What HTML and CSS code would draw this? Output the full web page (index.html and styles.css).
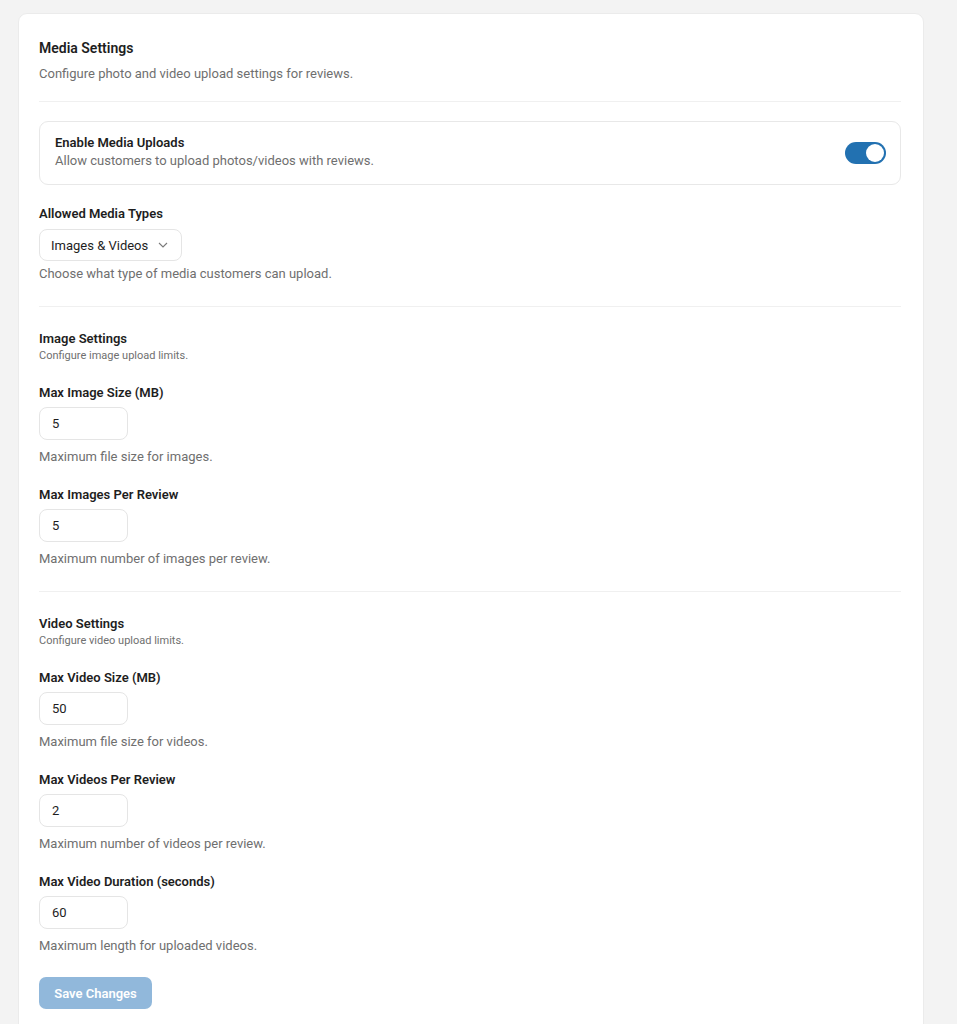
FILE: index.html
```html
<!DOCTYPE html>
<html lang="en">
<head>
<meta charset="utf-8">
<title>Media Settings</title>
<link rel="stylesheet" href="styles.css">
</head>
<body>
<div class="card">
  <header class="head">
    <h2 class="title">Media Settings</h2>
    <p class="desc">Configure photo and video upload settings for reviews.</p>
  </header>
  <hr class="divider first">
  <div class="toggle-box">
    <div class="toggle-text">
      <div class="toggle-title">Enable Media Uploads</div>
      <div class="desc">Allow customers to upload photos/videos with reviews.</div>
    </div>
    <span class="switch"><span class="knob"></span></span>
  </div>

  <div class="field top">
    <div class="label">Allowed Media Types</div>
    <div class="select">Images &amp; Videos
      <svg class="chev" width="10" height="6" viewBox="0 0 10 6"><path d="M1 1l4 4 4-4" fill="none" stroke="#7a7a7a" stroke-width="1.1"/></svg>
    </div>
    <p class="help">Choose what type of media customers can upload.</p>
  </div>

  <hr class="divider">

  <section class="group">
    <div class="group-title">Image Settings</div>
    <div class="group-sub">Configure image upload limits.</div>
    <div class="field">
      <div class="label">Max Image Size (MB)</div>
      <div class="input">5</div>
      <p class="help">Maximum file size for images.</p>
    </div>
    <div class="field">
      <div class="label">Max Images Per Review</div>
      <div class="input">5</div>
      <p class="help">Maximum number of images per review.</p>
    </div>
  </section>

  <hr class="divider">

  <section class="group">
    <div class="group-title">Video Settings</div>
    <div class="group-sub">Configure video upload limits.</div>
    <div class="field">
      <div class="label">Max Video Size (MB)</div>
      <div class="input">50</div>
      <p class="help">Maximum file size for videos.</p>
    </div>
    <div class="field">
      <div class="label">Max Videos Per Review</div>
      <div class="input">2</div>
      <p class="help">Maximum number of videos per review.</p>
    </div>
    <div class="field">
      <div class="label">Max Video Duration (seconds)</div>
      <div class="input">60</div>
      <p class="help">Maximum length for uploaded videos.</p>
    </div>
  </section>

  <button class="save" type="button">Save Changes</button>
</div>
</body>
</html>
```

FILE: styles.css
```css
* { box-sizing: border-box; }
html, body { margin: 0; padding: 0; }
body {
  background: #f3f3f3;
  font-family: Roboto, "Liberation Sans", Arial, sans-serif;
  color: #1e1e1e;
  padding: 13px 33px 0 18px;
}
.card {
  width: 906px;
  background: #fff;
  border: 1px solid #ebebeb;
  border-radius: 9px;
  padding: 24px 22px 40px 20px;
}
.title {
  margin: 0;
  font-size: 14px;
  line-height: 20px;
  font-weight: 600;
  color: #1e1e1e;
}
.desc {
  margin: 0;
  font-size: 13px;
  line-height: 18px;
  color: #6f6f6f;
}
.head .desc { margin-top: 7px; }
.divider {
  border: 0;
  height: 1px;
  background: #f0f0f0;
  margin: 23px 0;
}
.divider.first { margin: 18px 0 19px; }
.toggle-box {
  display: flex;
  align-items: center;
  justify-content: space-between;
  border: 1px solid #e8e8e8;
  border-radius: 9px;
  padding: 12px 14px 14px 15px;
}
.toggle-title {
  font-size: 13px;
  line-height: 18px;
  font-weight: 600;
}
.switch {
  position: relative;
  width: 41px;
  height: 22px;
  border-radius: 11px;
  background: #2271b1;
  display: inline-block;
  margin-top: 2px;
}
.knob {
  position: absolute;
  right: 2px;
  top: 2px;
  width: 18px;
  height: 18px;
  border-radius: 50%;
  background: #fff;
}
.field { margin-top: 21px; }
.field.top { margin-top: 20px; }
.field + .field { margin-top: 20px; }
.label {
  font-size: 13px;
  line-height: 18px;
  font-weight: 600;
}
.select {
  margin-top: 6px;
  width: 143px;
  height: 32px;
  border: 1px solid #e5e5e5;
  border-radius: 8px;
  display: flex;
  align-items: center;
  padding-left: 11px;
  font-size: 13px;
  color: #1e1e1e;
}
.chev { margin-left: 10px; }
.input {
  margin-top: 5px;
  width: 89px;
  height: 33px;
  border: 1px solid #e5e5e5;
  border-radius: 8px;
  display: flex;
  align-items: center;
  padding-left: 12px;
  font-size: 13px;
}
.help {
  margin: 8px 0 0;
  font-size: 13px;
  line-height: 18px;
  color: #6f6f6f;
}
.field.top .help { margin-top: 4px; }
.group-title {
  font-size: 13px;
  line-height: 18px;
  font-weight: 600;
}
.group-sub {
  font-size: 11px;
  line-height: 15px;
  color: #6f6f6f;
}
.save {
  margin-top: 22px;
  width: 113px;
  height: 32px;
  border: 0;
  border-radius: 7px;
  background: #91b8db;
  color: #fff;
  font-family: Roboto, "Liberation Sans", Arial, sans-serif;
  font-size: 13px;
  font-weight: 600;
  padding: 0;
}
```
